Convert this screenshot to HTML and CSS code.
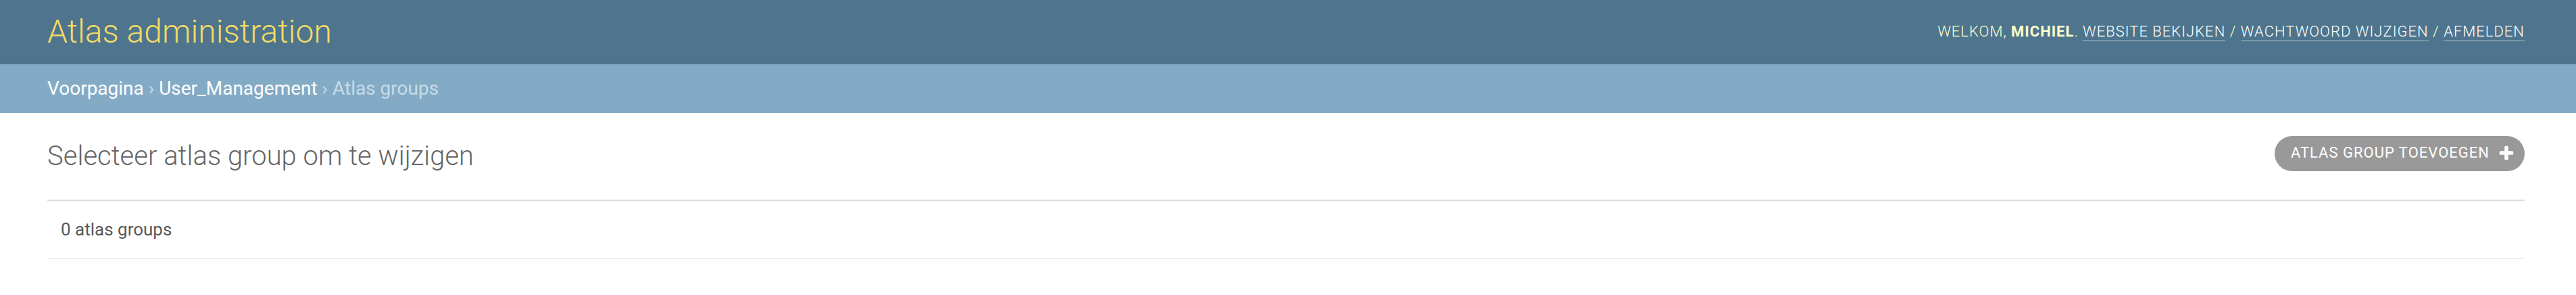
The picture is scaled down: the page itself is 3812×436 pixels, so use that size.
FILE: index.html
```html
<!DOCTYPE html>
<html lang="nl">
<head>
<meta charset="utf-8">
<title>Selecteer atlas group om te wijzigen | Atlas administration</title>
<link rel="stylesheet" href="styles.css">
</head>
<body>
<div class="container">
  <header class="header">
    <div class="branding">
      <h1 class="site-name"><a href="#" class="site-link">Atlas administration</a></h1>
    </div>
    <div class="user-tools">
      WELKOM, <strong class="user-name">MICHIEL</strong>.
      <a href="#" class="tool-link">WEBSITE BEKIJKEN</a> /
      <a href="#" class="tool-link">WACHTWOORD WIJZIGEN</a> /
      <a href="#" class="tool-link">AFMELDEN</a>
    </div>
  </header>
  <nav class="breadcrumbs">
    <a href="#" class="crumb-link">Voorpagina</a> › <a href="#" class="crumb-link">User_Management</a> › Atlas groups
  </nav>
  <main class="content">
    <div class="content-head">
      <h1 class="page-title">Selecteer atlas group om te wijzigen</h1>
      <a href="#" class="addlink">
        <span class="addlink-label">ATLAS GROUP TOEVOEGEN</span>
        <svg class="addlink-icon" width="26" height="26" viewBox="0 0 1792 1792" xmlns="http://www.w3.org/2000/svg"><path fill="#ffffff" d="M1600 736v192q0 40-28 68t-68 28h-416v416q0 40-28 68t-68 28h-192q-40 0-68-28t-28-68v-416h-416q-40 0-68-28t-28-68v-192q0-40 28-68t68-28h416v-416q0-40 28-68t68-28h192q40 0 68 28t28 68v416h416q40 0 68 28t28 68z"/></svg>
      </a>
    </div>
    <p class="paginator">0 atlas groups</p>
  </main>
</div>
</body>
</html>
```

FILE: styles.css
```css
html, body {
  margin: 0;
  padding: 0;
  background: #ffffff;
}

body {
  font-family: Roboto, "Liberation Sans", Arial, sans-serif;
  font-size: 28px;
  color: #333333;
}

a {
  text-decoration: none;
}

.header {
  display: flex;
  justify-content: space-between;
  align-items: center;
  padding: 18px 76px 20px 70px;
  background: #4e758d;
  color: #ffffcc;
}

.site-name {
  margin: 0;
  font-size: 48px;
  font-weight: 300;
  line-height: normal;
}

.site-link {
  color: #f2da65;
}

.user-tools {
  font-size: 22px;
  font-weight: 300;
  letter-spacing: 1px;
  color: #ffffcc;
  text-align: right;
  white-space: nowrap;
}

.user-name {
  font-weight: 700;
}

.tool-link {
  color: #ffffff;
  border-bottom: 2px solid rgba(255, 255, 255, 0.25);
}

.breadcrumbs {
  padding: 20px 76px 20px 70px;
  background: #84abc5;
  color: #c6dbe7;
  font-size: 28px;
  line-height: 32px;
}

.crumb-link {
  color: #ffffff;
}

.content {
  padding: 40px 76px 0 70px;
}

.content-head {
  display: flex;
  justify-content: space-between;
  align-items: flex-start;
  margin-bottom: 41px;
}

.page-title {
  margin: 0;
  font-size: 40px;
  font-weight: 300;
  line-height: normal;
  color: #666666;
}

.addlink {
  display: flex;
  align-items: center;
  height: 52px;
  margin-top: -6px;
  padding: 0 14px 0 24px;
  background: #999999;
  border-radius: 26px;
  color: #ffffff;
  font-size: 22px;
  font-weight: 400;
  letter-spacing: 1px;
  white-space: nowrap;
}

.addlink-label {
  padding-bottom: 4px;
}

.addlink-icon {
  display: block;
  margin-left: 12px;
}

.paginator {
  margin: 0;
  padding: 20px;
  font-size: 26px;
  line-height: 44px;
  color: #595959;
  border-top: 2px solid #dddddd;
  border-bottom: 2px solid #eeeeee;
}
```
